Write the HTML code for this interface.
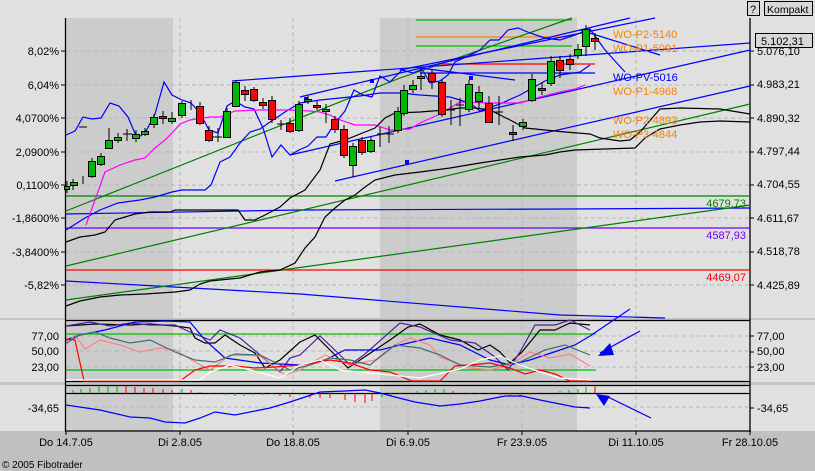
<!DOCTYPE html>
<html><head><meta charset="utf-8"><style>
html,body{margin:0;padding:0;width:815px;height:471px;overflow:hidden;background:#e0e0e0;font-family:"Liberation Sans",sans-serif}
svg{display:block}
text{font-family:"Liberation Sans",sans-serif;font-size:11px}
</style></head><body>
<svg width="815" height="471" viewBox="0 0 815 471" xmlns="http://www.w3.org/2000/svg">
<rect width="815" height="471" fill="#e0e0e0"/>
<rect x="0" y="431" width="815" height="40" fill="#c0c0c0"/>
<rect x="66" y="18" width="107" height="413" fill="#cccccc"/>
<rect x="380" y="18" width="197" height="413" fill="#cccccc"/>
<rect x="0" y="318" width="815" height="2" fill="#c4c4c4"/>
<rect x="0" y="382" width="815" height="3" fill="#c4c4c4"/>
<g stroke="#b8b8b8" stroke-dasharray="4,3" stroke-width="1">
<line x1="66" y1="51" x2="750" y2="51"/><line x1="66" y1="85" x2="750" y2="85"/><line x1="66" y1="118" x2="750" y2="118"/><line x1="66" y1="152" x2="750" y2="152"/><line x1="66" y1="185" x2="750" y2="185"/><line x1="66" y1="218" x2="750" y2="218"/><line x1="66" y1="252" x2="750" y2="252"/><line x1="66" y1="285" x2="750" y2="285"/>
<line x1="180" y1="18" x2="180" y2="431"/><line x1="293" y1="18" x2="293" y2="431"/><line x1="408" y1="18" x2="408" y2="431"/><line x1="522" y1="18" x2="522" y2="431"/><line x1="636" y1="18" x2="636" y2="431"/>
<line x1="66" y1="336" x2="750" y2="336"/><line x1="66" y1="351" x2="750" y2="351"/><line x1="66" y1="367" x2="750" y2="367"/><line x1="66" y1="407" x2="750" y2="407"/>
</g>
<g stroke="#000" stroke-width="1.3">
<line x1="65.5" y1="18" x2="65.5" y2="432"/><line x1="750" y1="18" x2="750" y2="432"/>
<line x1="65" y1="431" x2="751" y2="431"/>
<line x1="65" y1="320.5" x2="750" y2="320.5"/><line x1="65" y1="381.5" x2="750" y2="381.5"/>
<line x1="65" y1="385.5" x2="750" y2="385.5"/><line x1="65" y1="393.5" x2="750" y2="393.5"/>
</g>
<g stroke="#000"><line x1="61" y1="51" x2="65" y2="51"/><line x1="61" y1="85" x2="65" y2="85"/><line x1="61" y1="118" x2="65" y2="118"/><line x1="61" y1="152" x2="65" y2="152"/><line x1="61" y1="185" x2="65" y2="185"/><line x1="61" y1="218" x2="65" y2="218"/><line x1="61" y1="252" x2="65" y2="252"/><line x1="61" y1="285" x2="65" y2="285"/>
<line x1="750" y1="51" x2="754" y2="51"/><line x1="750" y1="85" x2="754" y2="85"/><line x1="750" y1="118" x2="754" y2="118"/><line x1="750" y1="152" x2="754" y2="152"/><line x1="750" y1="185" x2="754" y2="185"/><line x1="750" y1="218" x2="754" y2="218"/><line x1="750" y1="252" x2="754" y2="252"/><line x1="750" y1="285" x2="754" y2="285"/>
<line x1="750" y1="336" x2="754" y2="336"/><line x1="750" y1="352" x2="754" y2="352"/><line x1="750" y1="367" x2="754" y2="367"/><line x1="750" y1="408" x2="754" y2="408"/>
<line x1="180" y1="431" x2="180" y2="435"/><line x1="293" y1="431" x2="293" y2="435"/><line x1="408" y1="431" x2="408" y2="435"/><line x1="522" y1="431" x2="522" y2="435"/><line x1="636" y1="431" x2="636" y2="435"/><line x1="750" y1="431" x2="750" y2="435"/><line x1="66" y1="431" x2="66" y2="435"/>
</g>
<g text-anchor="end" fill="#000">
<text x="59" y="55">8,02%</text><text x="59" y="89">6,04%</text><text x="59" y="122">4,0700%</text><text x="59" y="156">2,0900%</text><text x="59" y="189">0,1100%</text><text x="59" y="222">-1,8600%</text><text x="59" y="256">-3,8400%</text><text x="59" y="289">-5,82%</text>
<text x="59" y="340">77,00</text><text x="59" y="355">50,00</text><text x="59" y="371">23,00</text><text x="59" y="412">-34,65</text>
</g>
<g fill="#000">
<text x="757" y="55">5.076,10</text><text x="757" y="88">4.983,21</text><text x="757" y="122">4.890,32</text><text x="757" y="155">4.797,44</text><text x="757" y="188">4.704,55</text><text x="757" y="222">4.611,67</text><text x="757" y="255">4.518,78</text><text x="757" y="289">4.425,89</text>
<text x="757" y="340">77,00</text><text x="757" y="355">50,00</text><text x="757" y="371">23,00</text><text x="757" y="412">-34,65</text>
</g>
<g text-anchor="middle" fill="#000">
<text x="66" y="446">Do 14.7.05</text><text x="180" y="446">Di 2.8.05</text><text x="293" y="446">Do 18.8.05</text><text x="408" y="446">Di 6.9.05</text><text x="522" y="446">Fr 23.9.05</text><text x="636" y="446">Di 11.10.05</text><text x="750" y="446">Fr 28.10.05</text>
</g>
<text x="2" y="468" style="font-size:10px">© 2005 Fibotrader</text>
<rect x="747.5" y="1.5" width="12" height="14" fill="#d8d8d8" stroke="#000"/><text x="750" y="13">?</text>
<rect x="764.5" y="1.5" width="48" height="14" fill="#d8d8d8" stroke="#000"/><text x="767" y="13" style="font-size:10.5px">Kompakt</text>
<rect x="755.5" y="33.5" width="57" height="14" fill="#d8d8d8" stroke="#000"/><text x="761" y="45">5.102,31</text>
<g stroke-width="1.2">
<line x1="66" y1="196" x2="750" y2="196" stroke="#008000"/>
<line x1="66" y1="228" x2="750" y2="228" stroke="#7000ff"/>
<line x1="66" y1="270" x2="750" y2="270" stroke="#ff0000"/>
<line x1="416" y1="20" x2="572" y2="20" stroke="#00c000"/>
<line x1="416" y1="37" x2="572" y2="37" stroke="#ff8000"/>
<line x1="416" y1="46" x2="572" y2="46" stroke="#00c000"/>
<line x1="440" y1="64" x2="595" y2="64" stroke="#ff0000"/>
<line x1="420" y1="73" x2="595" y2="73" stroke="#0000ff"/>
</g>
<g fill="none" stroke-width="1.2">
<polyline stroke="#0000ff" points="66,214 300,210 565,209 750,208"/>
<polyline stroke="#0000ff" points="66,281 300,294 560,315 665,318"/>
<polyline stroke="#008000" points="66,211 400,78 572,18"/>
<line x1="66" y1="266" x2="750" y2="104" stroke="#008000"/>
<line x1="66" y1="300" x2="750" y2="205" stroke="#008000"/>
<line x1="232" y1="81" x2="750" y2="43" stroke="#0000ff"/>
<line x1="335" y1="181" x2="750" y2="86" stroke="#0000ff"/>
<line x1="290" y1="155" x2="750" y2="50" stroke="#0000ff"/>
<line x1="300" y1="97" x2="630" y2="18" stroke="#0000ff"/>
<line x1="400" y1="70" x2="655" y2="18" stroke="#0000ff"/>
<line x1="420" y1="68" x2="515" y2="80" stroke="#0000ff"/>
<line x1="580" y1="30" x2="660" y2="55" stroke="#0000ff"/>
<polyline stroke="#0000ff" points="66,135 75,131 83,117 92,119 101,118 110,103 119,106 128,117 137,138 145,133 155,114 164,82 172,95 182,100 191,103 200,113 209,130 218,133 227,106 235,101 245,107 254,109 263,128 272,157 281,145 290,155 299,150 308,146 317,137 326,137 335,123 345,111 354,90 363,95 372,97 380,76 390,82 402,70 413,73 422,69 430,83 440,81 448,75 455,62 468,56 480,50 490,40 499,40 508,30 518,28 530,33 545,38 560,40 575,35 590,29 605,50 625,72"/>
<polyline stroke="#0000ff" points="66,230 85,218 100,210 118,203 140,200 155,197 172,192 182,190 205,190 211,185 220,162 230,157 240,143 250,132 260,129 270,122 285,112 300,103 320,100 360,96 380,93 400,93 420,95 450,97 470,103 480,111 500,104 520,95 545,81 560,75 580,72 590,65"/>
<polyline stroke="#ff00ff" points="86,225 95,200 105,172 120,165 135,160 145,158 155,148 165,140 173,132 180,124 190,120 210,117 220,117 235,111 260,110 290,110 310,111 320,112 330,115 340,120 355,125 375,125 390,130 410,129 420,123 440,114 460,102 490,103 520,103 540,97 560,92 575,89 585,85"/>
<polyline stroke="#000" points="66,242 80,237 95,235 105,232 115,220 125,217 135,214 150,212 170,212 175,210 190,210 210,210 238,210 245,220 255,220 265,215 280,207 290,198 305,190 320,170 330,144 345,140 365,132 375,128 385,118 395,113 420,112 445,110 460,108 475,108 490,110 500,115 512,121 525,128 545,130 565,132 590,134 600,138 620,141 630,140 640,132 660,109 680,108 720,109 750,114"/>
<polyline stroke="#000" points="66,306 80,301 100,297 120,295 145,294 175,292 190,290 200,284 210,281 240,278 260,272 280,270 295,263 305,248 315,237 325,217 335,208 345,200 355,195 365,187 375,180 395,175 420,172 450,168 480,163 500,160 520,157 545,155 560,152 575,150 635,148 645,138 660,129 680,125 700,122 720,121 750,122"/>
</g>
<g fill="#0000ff"><rect x="370" y="79" width="4" height="4"/><rect x="405" y="160" width="4" height="4"/><rect x="469" y="76" width="4" height="4"/><rect x="304" y="97" width="4" height="4"/></g>
<g stroke="#000" stroke-width="1">
<path d="M67 181V193M73 179V190M83 176V184M92 158V178M101 153V166M109 128V149M118 133V143M127 129V141M136 130V142M145 128V136M154 114V128M163 111V124M172 112V124M182 101V118M191 100V110M200 102V125M209 126V142M218 128V142M227 108V138M236 80V107M245 86V101M254 87V102M263 98V109M272 96V123M281 120V130M290 118V133M299 101V132M308 96V104M317 101V110M326 104V123M335 116V133M344 125V158M353 143V177M362 137V155M371 137V153M380 127V147M389 126V143M398 107V133M404 85V116M413 80V93M421 70V90M432 70V89M442 79V117M451 100V125M460 98V126M469 80V112M479 86V108M489 96V123M499 96V125M513 125V141M523 119V130M532 74V102M542 82V95M551 56V86M560 56V78M570 54V70M578 44V59M586 25V56M595 33V50"/>
<path d="M79 127H87M123 134H132M377 134H385M386 134H394M447 110H455M456 105H464M495 112H503M213 137H222M277 124H285"/>
</g>
<g stroke="#000" stroke-width="1">
<g fill="#00b800">
<rect x="64.5" y="186.5" width="5" height="3"/><rect x="70.5" y="182.5" width="7" height="3"/><rect x="88.5" y="161.5" width="7" height="15"/><rect x="97.5" y="156.5" width="7" height="8"/><rect x="105.5" y="140.5" width="7" height="8"/><rect x="114.5" y="137.5" width="7" height="3"/><rect x="132.5" y="134.5" width="7" height="4"/><rect x="141.5" y="131.5" width="7" height="3"/><rect x="150.5" y="117.5" width="7" height="7"/><rect x="168.5" y="118.5" width="7" height="3"/><rect x="178.5" y="103.5" width="7" height="12"/><rect x="223.5" y="111.5" width="7" height="26"/><rect x="232.5" y="82.5" width="7" height="24"/><rect x="295.5" y="104.5" width="7" height="26"/><rect x="304.5" y="99.5" width="7" height="2"/><rect x="322.5" y="109.5" width="7" height="2"/><rect x="349.5" y="146.5" width="7" height="19"/><rect x="367.5" y="140.5" width="7" height="11"/><rect x="394.5" y="111.5" width="7" height="19"/><rect x="400.5" y="90.5" width="7" height="23"/><rect x="409.5" y="85.5" width="7" height="4"/><rect x="417.5" y="76.5" width="7" height="2"/><rect x="465.5" y="84.5" width="7" height="25"/><rect x="475.5" y="92.5" width="7" height="9"/><rect x="519.5" y="122.5" width="7" height="4"/><rect x="528.5" y="79.5" width="7" height="21"/><rect x="547.5" y="61.5" width="7" height="22"/><rect x="574.5" y="49.5" width="7" height="6"/><rect x="582.5" y="29.5" width="7" height="17"/>
</g>
<g fill="#ff0000">
<rect x="159.5" y="116.5" width="7" height="2"/><rect x="196.5" y="106.5" width="7" height="17"/><rect x="205.5" y="130.5" width="7" height="10"/><rect x="241.5" y="90.5" width="7" height="4"/><rect x="250.5" y="89.5" width="7" height="11"/><rect x="259.5" y="102.5" width="7" height="3"/><rect x="268.5" y="100.5" width="7" height="19"/><rect x="286.5" y="123.5" width="7" height="8"/><rect x="313.5" y="105.5" width="7" height="2"/><rect x="331.5" y="119.5" width="7" height="10"/><rect x="340.5" y="129.5" width="7" height="26"/><rect x="358.5" y="140.5" width="7" height="12"/><rect x="428.5" y="73.5" width="7" height="8"/><rect x="438.5" y="82.5" width="7" height="32"/><rect x="485.5" y="103.5" width="7" height="19"/><rect x="509.5" y="132.5" width="7" height="2"/><rect x="538.5" y="88.5" width="7" height="2"/><rect x="556.5" y="60.5" width="7" height="10"/><rect x="566.5" y="59.5" width="7" height="5"/><rect x="591.5" y="38.5" width="7" height="3"/>
</g>
</g>
<g style="font-size:14px">
<text x="613" y="38" fill="#ff8000">WO-P2-5140</text>
<text x="613" y="52" fill="#ff8000">WO-P1-5091</text>
<text x="613" y="81" fill="#0000ff">WO-PV-5016</text>
<text x="613" y="95" fill="#ff8000">WO-P1-4968</text>
<text x="613" y="124" fill="#ff8000">WO-P2-4893</text>
<text x="613" y="138" fill="#ff8000">WO-P3-4844</text>
</g>
<text x="746" y="207" text-anchor="end" fill="#008000">4679,73</text>
<text x="746" y="239" text-anchor="end" fill="#7000ff">4587,93</text>
<text x="746" y="281" text-anchor="end" fill="#ff0000">4469,07</text>
<g fill="none" stroke-width="1.2">
<line x1="66" y1="334" x2="596" y2="334" stroke="#00c000"/>
<line x1="66" y1="370" x2="596" y2="370" stroke="#00c000"/>
<polyline stroke="#000" points="66,326 95,324 130,325 150,324 175,326 190,328 195,338 205,343 215,343 225,335 240,345 255,353 265,368 280,360 300,342 315,335 335,355 348,368 360,360 375,350 390,340 408,327 420,324 440,335 460,340 478,350 490,345 500,352 510,363 522,352 540,330 555,330 570,323 590,325"/>
<polyline stroke="#5020a0" points="66,326 90,322 110,326 130,323 150,325 175,325 190,332 210,340 220,330 240,338 260,355 280,372 290,358 300,355 320,336 340,355 350,365 365,354 400,323 420,327 450,340 475,343 495,357 508,370 520,352 535,325 555,325 570,320 590,330"/>
<polyline stroke="#0000ff" points="66,340 80,335 105,330 135,322 165,321 190,322 205,340 225,358 260,363 300,365 325,360 345,350 380,350 400,345 430,338 460,345 490,360 510,365 530,360 545,355 560,350 575,345 590,336 630,309"/>
<polyline stroke="#ff8080" points="66,345 75,335 85,349 100,340 120,345 140,352 160,348 175,350 195,362 210,370 230,355 260,356 285,375 300,370 325,355 350,365 375,360 395,345 410,338 430,345 440,357 470,368 490,370 510,365 530,352 550,358 570,354 590,366"/>
<polyline stroke="#407070" points="66,343 80,335 95,332 110,338 130,343 150,340 175,352 195,360 215,362 235,354 260,355 290,370 310,365 330,358 350,360 370,365 395,345 420,348 440,355 460,365 490,367 520,362 545,350 565,345 590,355"/>
<polyline stroke="#ff0000" points="66,339 75,340 84,381 180,381 195,370 210,366 235,366 255,368 275,367 300,365 330,360 350,363 370,370 390,372 412,381 440,381 455,366 470,365 490,363 510,368 525,374 540,370 555,374 570,381 590,381"/>
<polyline stroke="#ffffff" points="66,380 200,380 210,372 230,365 250,370 280,378 300,365 320,360 340,370 360,372 400,376 420,378 460,369 480,360 500,356 520,365 540,372 560,378 590,380"/>
</g>
<g stroke-width="1">
<g stroke="#00b000"><path d="M73 393V390M81 393V389M90 393V388M99 393V387M108 393V386M117 393V386M182 393V389M226 393V395M235 393V396M244 393V396M253 393V395M263 393V395M272 393V394M300 393V395M382 393V397M391 393V396M417 393V391M426 393V390M435 393V389M444 393V389M560 393V391M569 393V390M578 393V389M586 393V387"/></g>
<g stroke="#ff0000"><path d="M126 393V386M135 393V387M144 393V388M153 393V388M163 393V389M172 393V390M191 393V390M200 393V392M210 393V394M218 393V394M280 393V396M290 393V397M310 393V398M320 393V398M330 393V398M345 393V400M355 393V402M365 393V403M372 393V401M400 393V394M453 393V391M470 393V394M480 393V394M490 393V394M500 393V395M510 393V396M520 393V397M530 393V395M595 393V386"/></g>
</g>
<polyline fill="none" stroke="#0000ff" stroke-width="1.2" points="66,405 100,410 130,417 150,418 165,422 185,423 200,418 215,412 235,415 255,411 270,408 290,402 320,392 345,391 365,390 380,393 395,397 415,402 440,406 460,404 480,401 505,396 522,396 540,400 560,404 575,407 590,408"/>
<line x1="600" y1="353" x2="640" y2="331" stroke="#0000ff" stroke-width="1.2"/>
<polygon points="598,356 610,343 614,355" fill="#0000ff"/>
<line x1="608" y1="397" x2="651" y2="418" stroke="#0000ff" stroke-width="1.2"/>
<polygon points="596,394 610,396 604,406" fill="#0000ff"/>
</svg>
</body></html>
